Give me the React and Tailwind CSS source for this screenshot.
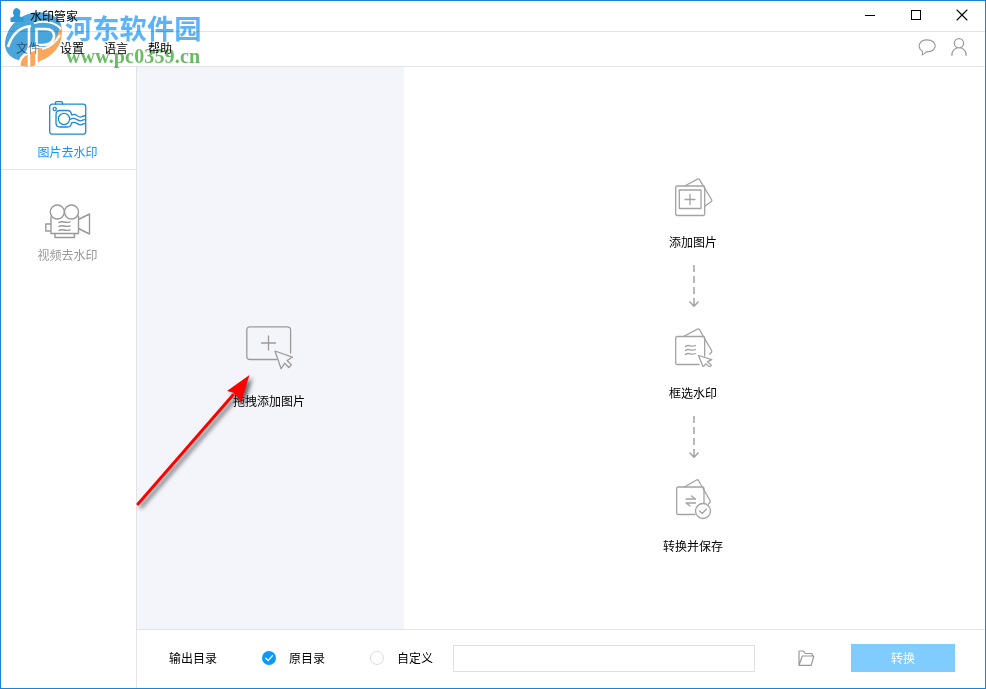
const menus = [
  { label: '文件', className: 'text-[#7d8489]' },
  { label: '设置', className: 'text-black' },
  { label: '语言', className: 'text-black' },
  { label: '帮助', className: 'text-black' },
]

const Svg = ({ children, w, h, className = '', ...rest }) => (
  <svg
    width={w}
    height={h}
    viewBox={`0 0 ${w} ${h}`}
    fill="none"
    stroke="currentColor"
    strokeLinecap="round"
    strokeLinejoin="round"
    className={`block shrink-0 ${className}`}
    {...rest}
  >
    {children}
  </svg>
)

const CameraIcon = () => (
  <Svg w={38} h={34} strokeWidth="1.3" className="text-[#1a8ad6]">
    <rect x="0.7" y="3.2" width="36" height="30" rx="2.5" />
    <path d="M6.5 3V1.8Q6.5 .7 7.6 .7h4.8q1.1 0 1.1 1.1V3" />
    <circle cx="5.7" cy="8" r="1.6" />
    <path d="M22.500 13.500q-.5-4-4-4h-7.500q-4 0-4 4v8.500q0 4 4 4h7.500q3.500 0 4-4" />
    <circle cx="15" cy="18" r="5.600" />
    <path d="M23 14c3.500-2.500 6 3 9 2 1.700-.600 2.700-1.500 4.500-1.200M21.500 18.300c4.500-3.200 7 2 10 1.500 2-.400 3-1.500 5-1.200M23 22c3.500-2.500 6 2.500 9 1.800 1.700-.500 2.700-1.500 4.500-1.200" />
  </Svg>
)

const VideoIcon = () => (
  <Svg w={46} h={35} strokeWidth="1.4" className="text-[#999]">
    <circle cx="12.3" cy="8" r="7" />
    <circle cx="26.5" cy="8" r="7" />
    <path d="M6 13v16.500h27.500V12M33.500 15.500l11-5.500v20l-11-5.500M6 20H.8v7H6M10 29.500v4h19.500v-4" />
    <path d="M14 18.500c3-2.500 7 1.500 11-.7M14 22.500c3-2.500 7 1.500 11-.7M14 26.500c3-2.500 7 1.500 11-.7" />
  </Svg>
)

const DropIcon = () => (
  <Svg w={48} h={45} strokeWidth="1.3" className="ml-0.5 text-[#9b9b9b]">
    <path d="M30.500 33.500H4.200Q.8 33.500 .8 30.200V4.200Q.8 .8 4.200 .8h37q3.400 0 3.400 3.400V27" />
    <path d="M22.500 10v14M15.500 17h14" />
    <path d="M29 25l17.300 6.200-5.200 3.300 4.300 4.400-2.600 2.600-4.200-4.200-3.500 5.400z" />
  </Svg>
)

const AddIcon = () => (
  <Svg w={38} h={39} strokeWidth="1.3" className="ml-0.5 text-[#a3a3a3]">
    <rect x="0.7" y="8" width="29" height="29.500" rx="1.500" />
    <rect x="4.300" y="12" width="21.700" height="18.500" />
    <path d="M15 16.500v10M10 21.500h10M10.500 7.500L22.500 1.200q1.300-.700 2 .500L36.500 21.500q.800 1.300-.5 2.300L30 28" />
  </Svg>
)

const SelectIcon = () => (
  <Svg w={38} h={39} strokeWidth="1.3" className="ml-0.5 text-[#a3a3a3]">
    <path d="M24 36.500H2.200Q.7 36.500 .7 35V10Q.7 8.500 2.200 8.500h26q1.500 0 1.500 1.500V28" />
    <path d="M8.500 8.500L22.500 1.200q1.300-.700 2 .500L36.500 22.500q.700 1.300-.5 2.200L35 26" />
    <path d="M10.500 18.500c3-3 6 1.500 10-1M10.500 22.500c3-3 6 1.500 10-1M10.500 26.500c3-3 6 1.500 10-1" />
    <path d="M23.500 27.500l13.300 4.200-4.300 2 3.800 3.500-1.900 1.900-3.600-3.500-2.600 3.500z" />
  </Svg>
)

const SaveIcon = () => (
  <Svg w={38} h={41} strokeWidth="1.3" className="ml-0.5 text-[#a3a3a3]">
    <path d="M20 35.500H3.200q-1.500 0-1.500-1.500V9.500Q1.700 8 3.200 8h24.300q1.500 0 1.500 1.500V24" />
    <path d="M9.500 8L21.500 1q1.300-.600 2 .5L35 21.500q.700 1.300-.5 2.500L33.500 25" />
    <path d="M11 20h9.500L16.500 17M20.500 24H11l4 3" />
    <circle cx="28" cy="32" r="7.500" />
    <path d="M24.500 32l2.700 2.500 4.300-4.500" />
  </Svg>
)

const DownArrow = () => (
  <Svg w={12} h={43} strokeWidth="1.500" strokeLinecap="butt" className="ml-px text-[#a3a3a3]">
    <path d="M6 0v7M6 11v7M6 22v7M6 33v8M1.500 36.500L6 41.200l4.500-4.700" />
  </Svg>
)

const SiteMark = () => (
  <div className="pointer-events-none absolute left-[3px] top-1.5 h-[62px] w-[200px]">
    <svg width="62" height="62" viewBox="4 7 62 62" className="absolute left-0 top-0 mix-blend-multiply">
      <path fill="#4aa5db" d="M5 44C6 28 18 15 34 12.500 47 11 57 15 61 24q1.500 7-1 13.500L50 47H28l-7 14Q5 57 5 44z" />
      <path fill="#f9a75c" d="M60 24c6 17-4 31-20 37l-6 5q-7 1-15-.5 0-8 9-11.500l10-5c13-3 21-11 22-25z" />
      <path
        fill="none"
        stroke="#fff"
        strokeWidth="2.600"
        d="M8 47C12 34 20 27 31 26M29 27v40M36.500 68V29h9c6 0 9 3 8.500 8-.7 5-5 8-12 8h-4M19 67q0-11 9.500-14"
      />
      <path fill="none" stroke="#fff" strokeWidth="2" d="M34 23c12-3 21-1 27 6M42 49q11-2 18-14" />
      <path
        fill="#2f98d4"
        d="M16.500 8a4.500 4.500 0 0 1 3.500 6.500q-1.500 2.500 3.500 3v4.500h-13v-4.500q4.500-.5 3-3A4.500 4.500 0 0 1 16.500 8z"
      />
    </svg>
    <div className="absolute left-[61px] top-[2px] whitespace-nowrap font-['Noto_Sans_CJK_SC',sans-serif] text-[27.3px] font-bold leading-[36px] text-[#35a0f5]/80 mix-blend-multiply">
      河东软件园
    </div>
    <div className="absolute left-[62px] top-[37px] whitespace-nowrap font-['Liberation_Serif',serif] text-[20px] font-bold leading-6 tracking-[0.15px] text-[#44ab3c]/80 mix-blend-multiply">
      www.pc0359.cn
    </div>
  </div>
)

const TitleBar = () => (
  <div className="flex h-[31px] shrink-0 items-center border-b border-[#e3e3e6] pl-[29px]">
    <span className="relative flex-1">水印管家</span>
    <div className="-mt-px mr-[35px] h-px w-2.5 bg-black" />
    <Svg w={12} h={12} strokeWidth="1" className="-mt-[3px] mr-[34px] text-black" strokeLinejoin="miter">
      <path d="M1.500 1.500h9v9h-9z" shapeRendering="crispEdges" />
    </Svg>
    <Svg w={12} h={12} strokeWidth="1.100" className="-mt-[3px] mr-[17px] text-black">
      <path d="M1 1l10 10M11 1L1 11" />
    </Svg>
  </div>
)

const MenuBar = () => (
  <div className="flex h-[35px] shrink-0 items-center border-b border-[#e3e3e6] pl-[15px]">
    <div className="-mt-0.5 flex flex-1 gap-5">
      {menus.map((menu) => (
        <span key={menu.label} className={menu.className}>{menu.label}</span>
      ))}
    </div>
    <Svg w={18} h={17} strokeWidth="1.200" className="-mt-[4px] mr-[15px] text-[#9b9b9b]">
      <path d="M4.200 12.200C-1 8.500 .7 .8 9 .8c11 0 11 12 0 12l-.8 0Q6.500 15.600 4 16q1.200-2 .2-3.800z" />
    </Svg>
    <Svg w={16} h={18} strokeWidth="1.300" className="-mt-[5px] mr-[18px] text-[#9b9b9b]">
      <circle cx="8" cy="5.300" r="4.600" />
      <path d="M.9 17.300c0-4 2-6.300 5-7.300M15.100 17.300c0-4-2-6.300-5-7.300" />
    </Svg>
  </div>
)

const Sidebar = () => (
  <div className="flex w-[136px] shrink-0 flex-col border-r border-[#e3e3e6]">
    <div className="flex h-[103px] flex-col items-center border-b border-[#e3e3e6] pr-0.5 pt-[34px] text-[#1296fb]">
      <CameraIcon />
      <span className="mt-2">图片去水印</span>
    </div>
    <div className="flex flex-col items-center pr-0.5 pt-[34px] text-[#999]">
      <VideoIcon />
      <span className="mt-[7px]">视频去水印</span>
    </div>
  </div>
)

const Steps = () => (
  <div className="flex flex-1 flex-col items-center pr-[3px] pt-[111px]">
    <AddIcon />
    <span className="mt-4">添加图片</span>
    <div className="mt-[14px]"><DownArrow /></div>
    <div className="mt-5"><SelectIcon /></div>
    <span className="mt-[17px]">框选水印</span>
    <div className="mt-[14px]"><DownArrow /></div>
    <div className="mt-5"><SaveIcon /></div>
    <span className="mt-[17px]">转换并保存</span>
  </div>
)

const OutputBar = () => (
  <div className="flex h-[59px] shrink-0 items-center border-t border-[#e3e3e6] pb-0.5 pl-8">
    <span className="w-[93px]">输出目录</span>
    <div className="flex w-[108px] items-center gap-[13px]">
      <Svg w={14} h={14} strokeWidth="1.300" className="text-white">
        <circle cx="7" cy="7" r="7" fill="#0b99ff" stroke="none" />
        <path d="M3.800 7.200l2.400 2.400 4.300-5" />
      </Svg>
      <span>原目录</span>
    </div>
    <div className="flex w-[83px] items-center gap-[13px]">
      <div className="h-3.5 w-3.5 rounded-full border border-[#dcdcdc]" />
      <span>自定义</span>
    </div>
    <div className="h-[27px] w-[302px] border border-[#e0e0e0]" />
    <Svg w={17} h={17} strokeWidth="1.200" className="ml-[43px] text-[#999]">
      <path d="M1 15V1.500Q1 1 1.500 1h4l1.700 2.500h6.300q.8 0 .8.800V6M1 15.300L4.300 6h11.500l-2.600 9.400H1.500Q.900 15.400 1 15.300z" />
    </Svg>
    <button className="ml-9 h-7 w-[104px] bg-[#80ccff] text-white">转换</button>
  </div>
)

const App = () => {
  return (
    <div className="relative flex h-[689px] w-[986px] flex-col overflow-hidden border border-[#1883d7] bg-white font-['Noto_Sans_CJK_SC',sans-serif] text-[12px] leading-[18px] text-black">
      <TitleBar />
      <MenuBar />
      <div className="flex min-h-0 flex-1">
        <Sidebar />
        <div className="flex flex-1 flex-col">
          <div className="flex flex-1">
            <div className="flex w-[267px] flex-col items-center bg-[#f4f5fa] pr-[3px] pt-[259px]">
              <DropIcon />
              <span className="mt-[21px]">拖拽添加图片</span>
            </div>
            <Steps />
          </div>
          <OutputBar />
        </div>
      </div>

      <svg
        width="130"
        height="145"
        viewBox="0 0 130 145"
        className="pointer-events-none absolute left-[130px] top-[368px] drop-shadow-[3px_3px_2px_rgba(0,0,0,0.6)]"
      >
        <path d="M7 135L102 26" stroke="#ff0000" strokeWidth="3" strokeLinecap="round" />
        <path d="M118.500 6L96 22l6 1.500 5.500 5.500 2.500 4.500z" fill="#ff0000" />
      </svg>
      <SiteMark />
    </div>
  )
}

export default App
